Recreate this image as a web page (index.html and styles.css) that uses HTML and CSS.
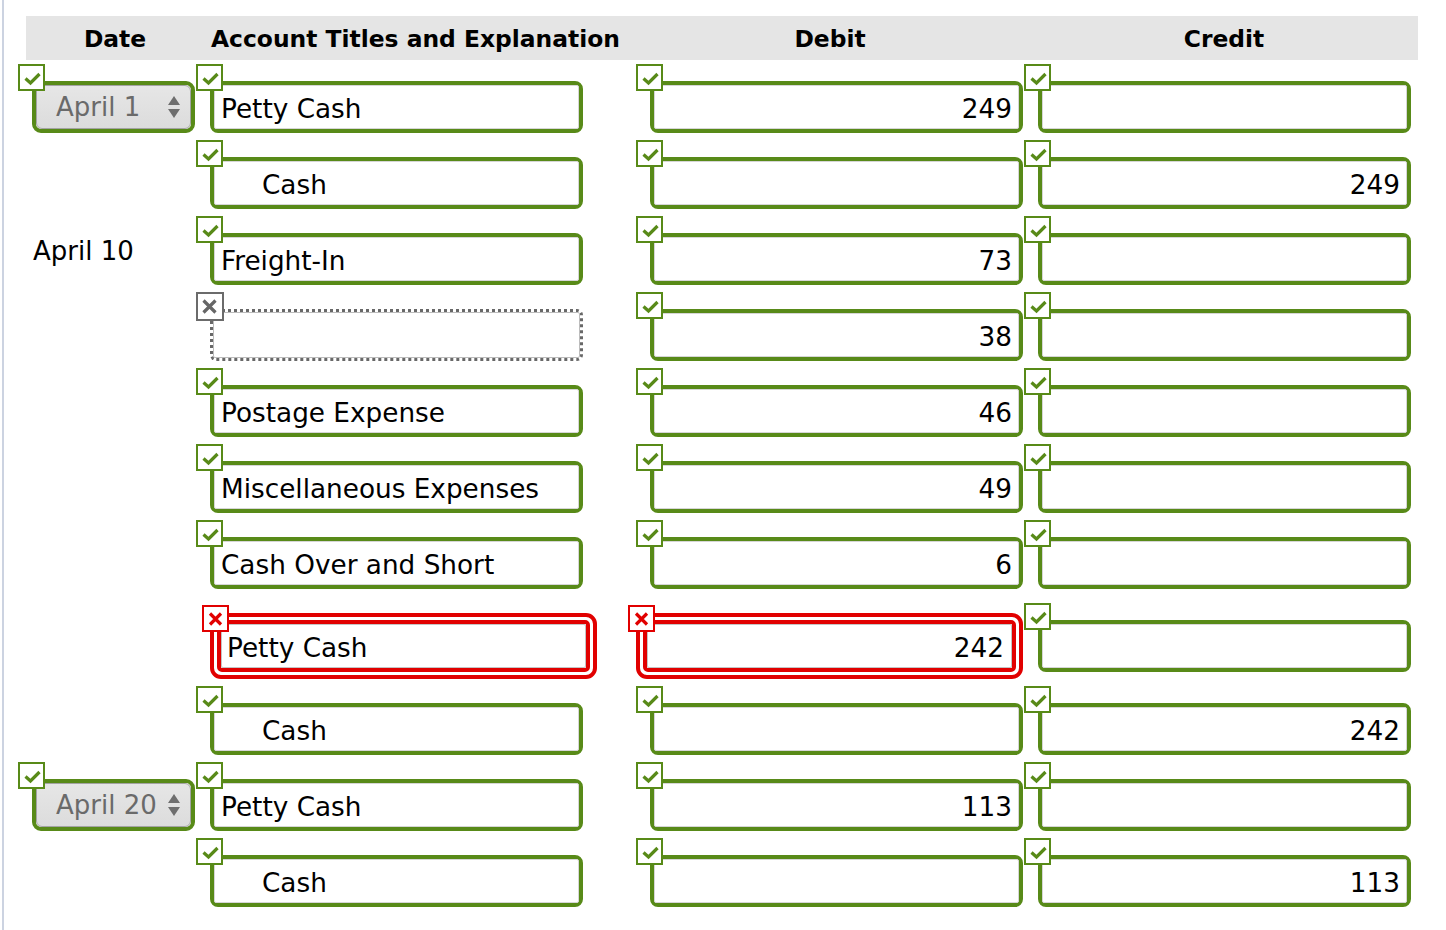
FILE: index.html
```html
<!DOCTYPE html>
<html lang="en">
<head>
<meta charset="utf-8">
<title>Journal Entries</title>
<link rel="stylesheet" href="styles.css">
</head>
<body>
<div class="page">
  <div class="journal">
    <div class="head">
      <div class="h h-date">Date</div>
      <div class="h h-acct">Account Titles and Explanation</div>
      <div class="h h-num">Debit</div>
      <div class="h h-num h-credit">Credit</div>
    </div>

    <!-- Row 1 -->
    <div class="row">
      <div class="cell c-date">
        <div class="field sel">
          <span class="mark ok"><svg viewBox="0 0 23 23"><path d="M5.5 12.5 L10.5 17 L19.5 8"/></svg></span>
          <div class="select"><span class="sel-text">April 1</span><svg class="spin" viewBox="0 0 12 24"><path d="M6 1 L12 10 L0 10 Z"/><path d="M0 14 L12 14 L6 23 Z"/></svg></div>
        </div>
      </div>
      <div class="cell c-acct"><div class="field"><span class="mark ok"><svg viewBox="0 0 23 23"><path d="M5.5 12.5 L10.5 17 L19.5 8"/></svg></span><div class="inp">Petty Cash</div></div></div>
      <div class="cell c-num"><div class="field"><span class="mark ok"><svg viewBox="0 0 23 23"><path d="M5.5 12.5 L10.5 17 L19.5 8"/></svg></span><div class="inp num">249</div></div></div>
      <div class="cell c-num"><div class="field"><span class="mark ok"><svg viewBox="0 0 23 23"><path d="M5.5 12.5 L10.5 17 L19.5 8"/></svg></span><div class="inp num"></div></div></div>
    </div>

    <!-- Row 2 -->
    <div class="row">
      <div class="cell c-date"></div>
      <div class="cell c-acct"><div class="field"><span class="mark ok"><svg viewBox="0 0 23 23"><path d="M5.5 12.5 L10.5 17 L19.5 8"/></svg></span><div class="inp indent">Cash</div></div></div>
      <div class="cell c-num"><div class="field"><span class="mark ok"><svg viewBox="0 0 23 23"><path d="M5.5 12.5 L10.5 17 L19.5 8"/></svg></span><div class="inp num"></div></div></div>
      <div class="cell c-num"><div class="field"><span class="mark ok"><svg viewBox="0 0 23 23"><path d="M5.5 12.5 L10.5 17 L19.5 8"/></svg></span><div class="inp num">249</div></div></div>
    </div>

    <!-- Row 3 -->
    <div class="row">
      <div class="cell c-date date-text">April 10</div>
      <div class="cell c-acct"><div class="field"><span class="mark ok"><svg viewBox="0 0 23 23"><path d="M5.5 12.5 L10.5 17 L19.5 8"/></svg></span><div class="inp">Freight-In</div></div></div>
      <div class="cell c-num"><div class="field"><span class="mark ok"><svg viewBox="0 0 23 23"><path d="M5.5 12.5 L10.5 17 L19.5 8"/></svg></span><div class="inp num">73</div></div></div>
      <div class="cell c-num"><div class="field"><span class="mark ok"><svg viewBox="0 0 23 23"><path d="M5.5 12.5 L10.5 17 L19.5 8"/></svg></span><div class="inp num"></div></div></div>
    </div>

    <!-- Row 4 -->
    <div class="row">
      <div class="cell c-date"></div>
      <div class="cell c-acct"><div class="field dotted"><span class="mark blank"><svg viewBox="0 0 23 23"><path d="M5.5 6.5 L17.5 18.5 M17.5 6.5 L5.5 18.5"/></svg></span><div class="inp"></div></div></div>
      <div class="cell c-num"><div class="field"><span class="mark ok"><svg viewBox="0 0 23 23"><path d="M5.5 12.5 L10.5 17 L19.5 8"/></svg></span><div class="inp num">38</div></div></div>
      <div class="cell c-num"><div class="field"><span class="mark ok"><svg viewBox="0 0 23 23"><path d="M5.5 12.5 L10.5 17 L19.5 8"/></svg></span><div class="inp num"></div></div></div>
    </div>

    <!-- Row 5 -->
    <div class="row">
      <div class="cell c-date"></div>
      <div class="cell c-acct"><div class="field"><span class="mark ok"><svg viewBox="0 0 23 23"><path d="M5.5 12.5 L10.5 17 L19.5 8"/></svg></span><div class="inp">Postage Expense</div></div></div>
      <div class="cell c-num"><div class="field"><span class="mark ok"><svg viewBox="0 0 23 23"><path d="M5.5 12.5 L10.5 17 L19.5 8"/></svg></span><div class="inp num">46</div></div></div>
      <div class="cell c-num"><div class="field"><span class="mark ok"><svg viewBox="0 0 23 23"><path d="M5.5 12.5 L10.5 17 L19.5 8"/></svg></span><div class="inp num"></div></div></div>
    </div>

    <!-- Row 6 -->
    <div class="row">
      <div class="cell c-date"></div>
      <div class="cell c-acct"><div class="field"><span class="mark ok"><svg viewBox="0 0 23 23"><path d="M5.5 12.5 L10.5 17 L19.5 8"/></svg></span><div class="inp">Miscellaneous Expenses</div></div></div>
      <div class="cell c-num"><div class="field"><span class="mark ok"><svg viewBox="0 0 23 23"><path d="M5.5 12.5 L10.5 17 L19.5 8"/></svg></span><div class="inp num">49</div></div></div>
      <div class="cell c-num"><div class="field"><span class="mark ok"><svg viewBox="0 0 23 23"><path d="M5.5 12.5 L10.5 17 L19.5 8"/></svg></span><div class="inp num"></div></div></div>
    </div>

    <!-- Row 7 -->
    <div class="row">
      <div class="cell c-date"></div>
      <div class="cell c-acct"><div class="field"><span class="mark ok"><svg viewBox="0 0 23 23"><path d="M5.5 12.5 L10.5 17 L19.5 8"/></svg></span><div class="inp">Cash Over and Short</div></div></div>
      <div class="cell c-num"><div class="field"><span class="mark ok"><svg viewBox="0 0 23 23"><path d="M5.5 12.5 L10.5 17 L19.5 8"/></svg></span><div class="inp num">6</div></div></div>
      <div class="cell c-num"><div class="field"><span class="mark ok"><svg viewBox="0 0 23 23"><path d="M5.5 12.5 L10.5 17 L19.5 8"/></svg></span><div class="inp num"></div></div></div>
    </div>

    <!-- Row 8 (errors) -->
    <div class="row">
      <div class="cell c-date"></div>
      <div class="cell c-acct"><div class="field err"><span class="mark bad"><svg viewBox="0 0 23 23"><path d="M6 6.5 L17 17.5 M17 6.5 L6 17.5"/></svg></span><div class="ring"><div class="inp">Petty Cash</div></div></div></div>
      <div class="cell c-num"><div class="field err err-num"><span class="mark bad"><svg viewBox="0 0 23 23"><path d="M6 6.5 L17 17.5 M17 6.5 L6 17.5"/></svg></span><div class="ring"><div class="inp num">242</div></div></div></div>
      <div class="cell c-num"><div class="field"><span class="mark ok"><svg viewBox="0 0 23 23"><path d="M5.5 12.5 L10.5 17 L19.5 8"/></svg></span><div class="inp num"></div></div></div>
    </div>

    <!-- Row 9 -->
    <div class="row">
      <div class="cell c-date"></div>
      <div class="cell c-acct"><div class="field"><span class="mark ok"><svg viewBox="0 0 23 23"><path d="M5.5 12.5 L10.5 17 L19.5 8"/></svg></span><div class="inp indent">Cash</div></div></div>
      <div class="cell c-num"><div class="field"><span class="mark ok"><svg viewBox="0 0 23 23"><path d="M5.5 12.5 L10.5 17 L19.5 8"/></svg></span><div class="inp num"></div></div></div>
      <div class="cell c-num"><div class="field"><span class="mark ok"><svg viewBox="0 0 23 23"><path d="M5.5 12.5 L10.5 17 L19.5 8"/></svg></span><div class="inp num">242</div></div></div>
    </div>

    <!-- Row 10 -->
    <div class="row">
      <div class="cell c-date">
        <div class="field sel">
          <span class="mark ok"><svg viewBox="0 0 23 23"><path d="M5.5 12.5 L10.5 17 L19.5 8"/></svg></span>
          <div class="select"><span class="sel-text">April 20</span><svg class="spin" viewBox="0 0 12 24"><path d="M6 1 L12 10 L0 10 Z"/><path d="M0 14 L12 14 L6 23 Z"/></svg></div>
        </div>
      </div>
      <div class="cell c-acct"><div class="field"><span class="mark ok"><svg viewBox="0 0 23 23"><path d="M5.5 12.5 L10.5 17 L19.5 8"/></svg></span><div class="inp">Petty Cash</div></div></div>
      <div class="cell c-num"><div class="field"><span class="mark ok"><svg viewBox="0 0 23 23"><path d="M5.5 12.5 L10.5 17 L19.5 8"/></svg></span><div class="inp num">113</div></div></div>
      <div class="cell c-num"><div class="field"><span class="mark ok"><svg viewBox="0 0 23 23"><path d="M5.5 12.5 L10.5 17 L19.5 8"/></svg></span><div class="inp num"></div></div></div>
    </div>

    <!-- Row 11 -->
    <div class="row">
      <div class="cell c-date"></div>
      <div class="cell c-acct"><div class="field"><span class="mark ok"><svg viewBox="0 0 23 23"><path d="M5.5 12.5 L10.5 17 L19.5 8"/></svg></span><div class="inp indent">Cash</div></div></div>
      <div class="cell c-num"><div class="field"><span class="mark ok"><svg viewBox="0 0 23 23"><path d="M5.5 12.5 L10.5 17 L19.5 8"/></svg></span><div class="inp num"></div></div></div>
      <div class="cell c-num"><div class="field"><span class="mark ok"><svg viewBox="0 0 23 23"><path d="M5.5 12.5 L10.5 17 L19.5 8"/></svg></span><div class="inp num">113</div></div></div>
    </div>
  </div>
</div>
</body>
</html>
```

FILE: styles.css
```css
html, body {
  margin: 0;
  padding: 0;
  background: #ffffff;
}

body {
  font-family: "DejaVu Sans", Verdana, sans-serif;
  color: #000;
}

.page {
  margin-left: 2px;
  border-left: 2px solid #ccd3e1;
  min-height: 930px;
  box-sizing: border-box;
  overflow: hidden;
}

.journal {
  margin-left: 22px;
  width: 1392px;
  padding-top: 16px;
}

.head,
.row {
  display: grid;
  grid-template-columns: 170px 440px 388px 394px;
}

.head {
  height: 44px;
  background: #e5e5e5;
  box-sizing: border-box;
  padding-top: 2px;
}

.h {
  font-weight: bold;
  font-size: 23.4px;
  line-height: 42px;
  white-space: nowrap;
}

.h-date {
  text-align: center;
  padding-left: 8px;
}

.h-acct {
  padding-left: 15px;
}

.h-num {
  text-align: center;
}

.h-credit {
  padding-left: 6px;
}

.row {
  padding-top: 21px;
  padding-bottom: 3px;
  align-items: center;
}

.cell {
  box-sizing: border-box;
  padding-left: 14px;
  min-height: 52px;
  display: flex;
  align-items: center;
}

.c-date {
  padding-left: 6px;
}

.date-text {
  align-self: start;
  align-items: flex-start;
  padding-top: 3px;
  padding-left: 7px;
  font-size: 26px;
  line-height: 30px;
}

/* ---------- fields ---------- */
.field {
  position: relative;
  width: 373px;
  height: 52px;
  box-sizing: border-box;
  border: 4px solid #588a18;
  border-radius: 8px;
  background: #fff;
}

.inp {
  height: 100%;
  box-sizing: border-box;
  border: 1px solid #d6d6d6;
  border-radius: 2px;
  background: #fff;
  font-size: 26.3px;
  padding: 3px 6px 0 6px;
  display: flex;
  align-items: center;
  white-space: nowrap;
  overflow: hidden;
}

.inp.num {
  justify-content: flex-end;
}

.inp.indent {
  padding-left: 47px;
}

.field.dotted {
  border: 3px dotted #686868;
  border-radius: 6px;
}

.field.dotted .inp {
  border-color: #bcbcbc;
}

.field.err {
  width: 387px;
  height: 66px;
  border: 4px solid #e10000;
  border-radius: 11px;
  padding: 3px;
}

.field.err-num {
  margin-left: -14px;
}

.ring {
  height: 100%;
  box-sizing: border-box;
  border: 4px solid #e10000;
  border-radius: 5px;
}

.field.err .inp {
  border-color: #c4c4c4;
  padding-left: 5px;
  padding-right: 7px;
}

/* ---------- marks (badges) ---------- */
.mark {
  position: absolute;
  left: -18px;
  top: -21px;
  width: 27px;
  height: 27px;
  box-sizing: border-box;
  border: 2px solid #588a18;
  background: #fff;
  z-index: 2;
}

.mark svg {
  display: block;
  width: 23px;
  height: 23px;
  fill: none;
  stroke-width: 3.2;
}

.mark.ok svg {
  stroke: #588a18;
}

.mark.blank {
  border-color: #6b6b6b;
  left: -17px;
  top: -20px;
  width: 28px;
  height: 29px;
}

.mark.blank svg {
  stroke: #666;
  stroke-width: 3.2;
}

.mark.bad {
  border-color: #e10000;
  left: -12px;
  top: -12px;
}

.mark.bad svg {
  stroke: #e10000;
  stroke-width: 3.2;
}

/* ---------- date select ---------- */
.field.sel {
  width: 163px;
  height: 52px;
  border-radius: 9px;
}

.select {
  height: 100%;
  box-sizing: border-box;
  border: 1.5px solid #a3a3a3;
  border-radius: 6px;
  background: linear-gradient(#e6e6e6, #dcdcdc);
  display: flex;
  align-items: center;
  padding-left: 19px;
  padding-right: 10px;
  color: #6a6a6a;
  font-size: 26px;
  white-space: nowrap;
}

.sel-text {
  flex: 1;
}

.spin {
  width: 12px;
  height: 24px;
  fill: #6e6e6e;
  flex: none;
}
```
